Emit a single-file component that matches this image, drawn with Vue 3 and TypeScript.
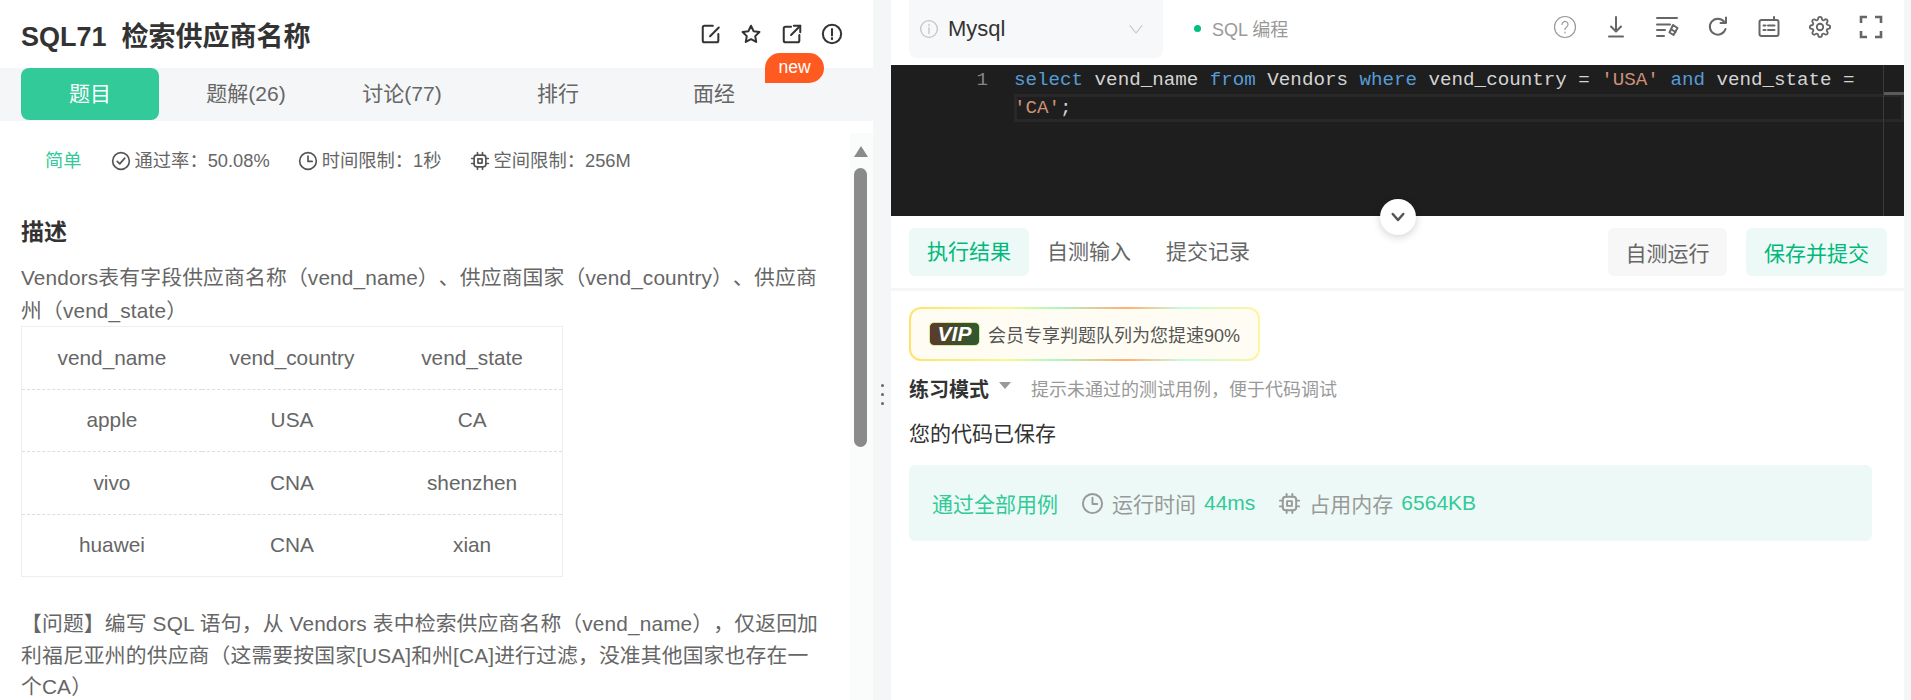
<script setup lang="ts">
const tabs = ["题目", "题解(26)", "讨论(77)", "排行", "面经"];
const tableHead = ["vend_name", "vend_country", "vend_state"];
const tableRows = [
  ["apple", "USA", "CA"],
  ["vivo", "CNA", "shenzhen"],
  ["huawei", "CNA", "xian"],
];
</script>

<template>
  <div class="page">
    <section class="left">
      <header class="title-bar">
        <h1 class="title">SQL71&nbsp; 检索供应商名称</h1>
        <div class="title-icons">
          <svg viewBox="0 0 24 24" class="ic"><path d="M20 12v7a2 2 0 0 1-2 2H5a2 2 0 0 1-2-2V5a2 2 0 0 1 2-2h9" /><path d="M20.5 5 11 14.5" /></svg>
          <svg viewBox="0 0 24 24" class="ic"><path d="M12 3l2.800 5.900 6.400.9-4.600 4.500 1.100 6.400L12 17.700l-5.700 3 1.100-6.400-4.600-4.500 6.400-.9z" /></svg>
          <svg viewBox="0 0 24 24" class="ic"><path d="M11 4H5a2 2 0 0 0-2 2v13a2 2 0 0 0 2 2h13a2 2 0 0 0 2-2v-6" /><path d="M14 3h7v7" /><path d="M21 3 11 13" /></svg>
          <svg viewBox="0 0 24 24" class="ic"><circle cx="12" cy="12" r="10" /><path d="M12 6.500v7" /><path d="M12 16.500v1.200" /></svg>
        </div>
      </header>
      <nav class="tabs">
        <a v-for="(tab, i) in tabs" :key="tab" class="tab" :class="{ active: i === 0 }">{{ tab }}</a>
        <span class="new-badge">new</span>
      </nav>
      <div class="left-body">
        <div class="content">
          <div class="meta">
            <span class="level">简单</span>
            <span class="meta-item">
              <svg viewBox="0 0 24 24" class="ic-meta"><circle cx="12" cy="12" r="10" /><path d="M7.500 12.500l3 3 6-7" /></svg>
              通过率：50.08%
            </span>
            <span class="meta-item">
              <svg viewBox="0 0 24 24" class="ic-meta"><circle cx="12" cy="12" r="10" /><path d="M12 6v6.500h5" /></svg>
              时间限制：1秒
            </span>
            <span class="meta-item">
              <svg viewBox="0 0 24 24" class="ic-meta"><rect x="5" y="5" width="14" height="14" rx="3" /><rect x="9.500" y="9.500" width="5" height="5" /><path d="M9 2v3M15 2v3M9 19v3M15 19v3M2 9h3M2 15h3M19 9h3M19 15h3" /></svg>
              空间限制：256M
            </span>
          </div>
          <h2 class="heading">描述</h2>
          <p class="desc">Vendors表有字段供应商名称（vend_name）、供应商国家（vend_country）、供应商州（vend_state）</p>
          <table class="data">
            <thead>
              <tr><th v-for="h in tableHead" :key="h">{{ h }}</th></tr>
            </thead>
            <tbody>
              <tr v-for="row in tableRows" :key="row[0]">
                <td v-for="cell in row" :key="cell">{{ cell }}</td>
              </tr>
            </tbody>
          </table>
          <p class="question">【问题】编写 SQL 语句，从 Vendors 表中检索供应商名称（vend_name），仅返回加利福尼亚州的供应商（这需要按国家[USA]和州[CA]进行过滤，没准其他国家也存在一个CA）</p>
        </div>
        <div class="scrollbar">
          <i class="scroll-up"></i>
          <i class="scroll-thumb"></i>
        </div>
      </div>
    </section>

    <div class="splitter"><i></i><i></i><i></i></div>

    <section class="right">
      <div class="toolbar">
        <div class="lang">
          <svg viewBox="0 0 24 24" class="ic-lang"><circle cx="12" cy="12" r="10" /><path d="M12 10.500v7M12 6.500v1.500" /></svg>
          <span class="lang-name">Mysql</span>
          <svg viewBox="0 0 24 24" class="ic-chev"><path d="M3 7l9 11 9-11" /></svg>
        </div>
        <span class="mode"><i class="dot"></i>SQL 编程</span>
        <div class="tools">
          <svg viewBox="0 0 24 24" class="tool light"><circle cx="12" cy="12" r="10.500" /><path d="M9 9.500a3 3 0 1 1 4.600 2.500c-1 .7-1.600 1.300-1.600 2.500M12 17v1" /></svg>
          <svg viewBox="0 0 24 24" class="tool"><path d="M12 2v14M7 11.500l5 5 5-5M5 21.500h14" /></svg>
          <svg viewBox="0 0 24 24" class="tool"><path d="M2 3h20M2 9.500h13M2 15h8M2 21h7" /><path d="M18 10l4.500 3-4 7-4-2.500z" /><path d="M16.500 14.500l4 2.500" /></svg>
          <svg viewBox="0 0 24 24" class="tool"><path d="M19.500 14a8 8 0 1 1-1.500-7.500" /><path d="M20 2.500V8h-5.500" /></svg>
          <svg viewBox="0 0 24 24" class="tool"><rect x="2.500" y="5" width="19" height="16" rx="2" /><path d="M17 2v3M6.500 10.500h2M11 10.500h6.500M6.500 15h2M11 15h6.500" /></svg>
          <svg viewBox="-1 -1 26 26" class="tool"><circle cx="12" cy="12" r="3.500" /><path d="M19.400 15a1.650 1.650 0 0 0 .33 1.820l.06.06a2 2 0 0 1 0 2.830 2 2 0 0 1-2.830 0l-.06-.06a1.650 1.650 0 0 0-1.820-.33 1.650 1.650 0 0 0-1 1.510V21a2 2 0 0 1-2 2 2 2 0 0 1-2-2v-.09A1.650 1.650 0 0 0 9 19.400a1.650 1.650 0 0 0-1.820.33l-.06.06a2 2 0 0 1-2.830 0 2 2 0 0 1 0-2.830l.06-.06a1.650 1.650 0 0 0 .33-1.820 1.650 1.650 0 0 0-1.510-1H3a2 2 0 0 1-2-2 2 2 0 0 1 2-2h.09A1.650 1.650 0 0 0 4.600 9a1.650 1.650 0 0 0-.33-1.820l-.06-.06a2 2 0 0 1 0-2.830 2 2 0 0 1 2.830 0l.06.06a1.650 1.650 0 0 0 1.820.33H9a1.650 1.650 0 0 0 1-1.510V3a2 2 0 0 1 2-2 2 2 0 0 1 2 2v.09a1.650 1.650 0 0 0 1 1.510 1.650 1.650 0 0 0 1.820-.33l.06-.06a2 2 0 0 1 2.830 0 2 2 0 0 1 0 2.830l-.06.06a1.650 1.650 0 0 0-.33 1.820V9a1.650 1.650 0 0 0 1.510 1H21a2 2 0 0 1 2 2 2 2 0 0 1-2 2h-.09a1.650 1.650 0 0 0-1.510 1z" /></svg>
          <svg viewBox="0 0 24 24" class="tool square"><path d="M2 8V2h6M16 2h6v6M22 16v6h-6M8 22H2v-6" /></svg>
        </div>
      </div>

      <div class="editor">
        <div class="line-no">1</div>
        <div class="code">
          <div class="line"><b class="kw">select</b> vend_name <b class="kw">from</b> Vendors <b class="kw">where</b> vend_country = <b class="str">'USA'</b> <b class="kw">and</b> vend_state =</div>
          <div class="line current"><b class="str">'CA'</b>;</div>
        </div>
        <div class="ruler"><i></i></div>
        <button class="collapse">
          <svg viewBox="0 0 24 24"><path d="M5 8l7 8 7-8" /></svg>
        </button>
      </div>

      <div class="result-tabs">
        <a class="rtab active">执行结果</a>
        <a class="rtab">自测输入</a>
        <a class="rtab">提交记录</a>
        <span class="spacer"></span>
        <button class="btn">自测运行</button>
        <button class="btn primary">保存并提交</button>
      </div>

      <div class="result">
        <div class="vip">
          <span class="vip-logo">VIP</span>
          <span>会员专享判题队列为您提速90%</span>
        </div>
        <div class="practice">
          <strong>练习模式</strong>
          <i class="caret"></i>
          <span class="hint">提示未通过的测试用例，便于代码调试</span>
        </div>
        <p class="saved">您的代码已保存</p>
        <div class="pass">
          <span class="pass-title">通过全部用例</span>
          <span class="pass-item">
            <svg viewBox="0 0 24 24" class="ic-pass"><circle cx="12" cy="12" r="10" /><path d="M12 6v6.500h5" /></svg>
            运行时间
            <em>44ms</em>
          </span>
          <span class="pass-item">
            <svg viewBox="0 0 24 24" class="ic-pass"><rect x="5" y="5" width="14" height="14" rx="3" /><rect x="9.500" y="9.500" width="5" height="5" /><path d="M9 2v3M15 2v3M9 19v3M15 19v3M2 9h3M2 15h3M19 9h3M19 15h3" /></svg>
            占用内存
            <em>6564KB</em>
          </span>
        </div>
      </div>
    </section>
  </div>
</template>

<style>
html,
body {
  margin: 0;
  background: #f5f6f8;
  overflow: hidden;
}
</style>

<style scoped>
.page {
  display: flex;
  width: 1911px;
  height: 700px;
  overflow: hidden;
  background: #f5f6f8;
  font-family: "Liberation Sans", "Noto Sans CJK SC", sans-serif;
  color: #666;
  text-spacing-trim: space-all;
}

svg {
  display: block;
  fill: none;
  stroke-linecap: round;
  stroke-linejoin: round;
}

.left {
  width: 873px;
  flex: none;
  display: flex;
  flex-direction: column;
  background: #fff;
}

.title-bar {
  height: 68px;
  flex: none;
  display: flex;
  align-items: center;
  justify-content: space-between;
  padding: 0 30px 0 21px;
}

.title {
  margin: 0;
  font-size: 27px;
  font-weight: 700;
  color: #333;
}

.title-icons {
  display: flex;
  gap: 18.500px;
}

.ic {
  width: 22px;
  height: 22px;
  stroke: #333;
  stroke-width: 2.200;
}

.tabs {
  position: relative;
  height: 53px;
  flex: none;
  display: flex;
  gap: 18px;
  padding-left: 21px;
  background: #f5f6f8;
}

.tab {
  width: 138px;
  height: 52px;
  line-height: 52px;
  text-align: center;
  font-size: 21px;
  color: #666;
  border-radius: 8px;
}

.tab.active {
  background: #32ca99;
  color: #fff;
}

.new-badge {
  position: absolute;
  left: 765px;
  top: -15px;
  width: 59px;
  height: 30px;
  line-height: 29px;
  text-align: center;
  font-size: 17.5px;
  color: #fff;
  background: #ff5a1f;
  border-radius: 15px 15px 15px 0;
}

.left-body {
  flex: 1;
  min-height: 0;
  display: flex;
}

.content {
  flex: 1;
  min-width: 0;
  padding: 0 23px 0 21px;
}

.meta {
  height: 24px;
  margin-top: 28px;
  display: flex;
  align-items: center;
  font-size: 18.300px;
  line-height: 24px;
  color: #666;
}

.level {
  margin-left: 24px;
  margin-right: 29px;
  color: #32ca99;
}

.meta-item {
  display: flex;
  align-items: center;
  gap: 4px;
  margin-right: 28px;
}

.ic-meta {
  width: 20px;
  height: 20px;
  stroke: #555;
  stroke-width: 2;
}

.heading {
  margin: 42px 0 0;
  font-size: 23px;
  line-height: 34px;
  font-weight: 700;
  color: #333;
}

.desc {
  margin: 12px 0 0;
  font-size: 20.800px;
  line-height: 33px;
  letter-spacing: 0.15px;
}

.data {
  margin-top: -1px;
  width: 542px;
  table-layout: fixed;
  border-collapse: collapse;
  border: 1px solid #eee;
  font-size: 20.800px;
  text-align: center;
}

.data th,
.data td {
  height: 61.500px;
  padding: 0;
  font-weight: 400;
  border-bottom: 1px dashed #ddd;
}

.data tbody tr:last-child td {
  border-bottom: 1px solid #eee;
}

.question {
  margin: 31px 0 0;
  font-size: 20.800px;
  line-height: 31.500px;
  letter-spacing: 0.15px;
}

.scrollbar {
  width: 23px;
  flex: none;
  margin-top: 12px;
  background: #fafbfb;
  display: flex;
  flex-direction: column;
  align-items: center;
}

.scroll-up {
  width: 0;
  height: 0;
  margin-top: 13px;
  margin-right: 2px;
  border-left: 7px solid transparent;
  border-right: 7px solid transparent;
  border-bottom: 11px solid #8a8a8a;
}

.scroll-thumb {
  width: 13px;
  height: 279px;
  margin-top: 11px;
  margin-right: 2px;
  border-radius: 7px;
  background: #8a8a8a;
}

.splitter {
  width: 18px;
  flex: none;
  display: flex;
  flex-direction: column;
  align-items: center;
  justify-content: flex-start;
  gap: 6px;
  padding-top: 384px;
  box-sizing: border-box;
}

.splitter i {
  width: 3px;
  height: 3px;
  border-radius: 50%;
  background: #666;
}

.right {
  width: 1013px;
  flex: none;
  background: #fff;
  display: flex;
  flex-direction: column;
}

.toolbar {
  height: 65px;
  flex: none;
  display: flex;
  align-items: flex-start;
  padding-left: 18px;
}

.lang {
  width: 254px;
  height: 58px;
  box-sizing: border-box;
  padding: 0 19px 0 10px;
  display: flex;
  align-items: center;
  background: #f7f8f9;
  border-radius: 0 0 8px 8px;
}

.ic-lang {
  width: 20px;
  height: 20px;
  stroke: #c4c4c4;
  stroke-width: 1.600;
}

.lang-name {
  flex: 1;
  margin-left: 9px;
  font-size: 22px;
  color: #333;
}

.ic-chev {
  width: 16px;
  height: 16px;
  stroke: #c4c4c4;
  stroke-width: 1.600;
}

.mode {
  display: flex;
  align-items: center;
  height: 56px;
  margin-left: 31px;
  font-size: 18px;
  color: #999;
}

.dot {
  width: 7px;
  height: 7px;
  margin-right: 11px;
  border-radius: 50%;
  background: #00c07f;
}

.tools {
  margin-left: auto;
  margin-right: 21px;
  height: 54px;
  display: flex;
  align-items: center;
  gap: 27px;
}

.tool {
  width: 24px;
  height: 24px;
  stroke: #666;
  stroke-width: 2;
}

.tool.light {
  stroke: #999;
  stroke-width: 1.200;
}

.tool.square {
  stroke-linecap: butt;
  stroke-linejoin: miter;
  stroke-width: 2.600;
}

.editor {
  position: relative;
  height: 151px;
  flex: none;
  display: flex;
  background: #1e1e1e;
  color: #d4d4d4;
  font-family: "Liberation Mono", monospace;
  font-size: 19.200px;
  line-height: 28px;
}

.line-no {
  width: 97px;
  flex: none;
  margin-top: 1px;
  text-align: right;
  color: #858585;
}

.code {
  flex: 1;
  margin-left: 26px;
  padding-top: 1px;
  white-space: pre;
}

.code b {
  font-weight: 400;
}

.kw {
  color: #569cd6;
}

.str {
  color: #ce9178;
}

.current {
  box-shadow: inset 0 0 0 3px #282828;
}

.ruler {
  position: absolute;
  top: 0;
  right: 0;
  bottom: 0;
  width: 20px;
  border-left: 1px solid #3a3a3a;
}

.ruler i {
  display: block;
  height: 3px;
  margin-top: 27px;
  background: #5a5a5a;
}

.collapse {
  position: absolute;
  left: 489px;
  bottom: -19px;
  z-index: 1;
  width: 36px;
  height: 36px;
  padding: 9px;
  border: 0;
  border-radius: 50%;
  background: #fff;
  box-shadow: 0 2px 8px rgba(0, 0, 0, 0.18);
}

.collapse svg {
  stroke: #555;
  stroke-width: 3.400;
}

.result-tabs {
  height: 75px;
  flex: none;
  box-sizing: border-box;
  padding: 12px 17px 12px 18px;
  display: flex;
  align-items: stretch;
  border-bottom: 3px solid #f5f6f7;
  font-size: 21px;
}

.rtab {
  padding: 0 15px;
  line-height: 48px;
  margin-right: 5px;
  color: #666;
  border-radius: 6px;
}

.rtab.active {
  margin-right: 3px;
  padding: 0 18px;
  color: #00b87a;
  background: #edf9f6;
}

.spacer {
  flex: 1;
}

.btn {
  font: inherit;
  color: #666;
  border: 0;
  border-radius: 6px;
  background: #f7f7f7;
  width: 119px;
  padding: 0;
}

.btn.primary {
  width: 141px;
  margin-left: 19px;
  color: #00b87a;
  background: #edf9f6;
}

.result {
  padding: 16px 32px 0 18px;
}

.vip {
  box-sizing: border-box;
  width: 351px;
  height: 54px;
  padding-left: 18px;
  display: flex;
  align-items: center;
  gap: 8px;
  font-size: 18px;
  color: #555;
  border: 2px solid transparent;
  border-radius: 12px;
  background:
    linear-gradient(#fffdf3, #fffdf3) padding-box,
    linear-gradient(90deg, #ffe26a, #f7f98f 28%, #aef7c2 42%, #ffb070 62%, #c6fbe0 78%, #fff59a) border-box;
}

.vip-logo {
  box-sizing: border-box;
  width: 51px;
  height: 24px;
  line-height: 22px;
  text-align: center;
  font-size: 21px;
  font-weight: 700;
  font-style: italic;
  color: #fff;
  border-radius: 5px;
  border: 1px solid #d6e89a;
  background: linear-gradient(90deg, #5c3a2c, #2e5a30);
}

.practice {
  height: 28px;
  margin-top: 13px;
  display: flex;
  align-items: center;
}

.practice strong {
  font-size: 20px;
  font-weight: 700;
  color: #333;
}

.caret {
  width: 0;
  height: 0;
  margin: -6px 0 0 10px;
  border-left: 6px solid transparent;
  border-right: 6px solid transparent;
  border-top: 7px solid #999;
}

.hint {
  margin-left: 20px;
  font-size: 18px;
  color: #999;
}

.saved {
  margin: 18px 0 0;
  font-size: 21px;
  line-height: 28px;
  color: #333;
}

.pass {
  height: 76px;
  margin-top: 17px;
  padding-left: 23px;
  display: flex;
  align-items: center;
  gap: 23px;
  font-size: 21px;
  color: #32ca99;
  background: #edf9f6;
  border-radius: 6px;
}

.pass-item {
  display: flex;
  align-items: center;
  gap: 8px;
  color: #999;
}

.pass-item em {
  font-style: normal;
  color: #32ca99;
}

.ic-pass {
  width: 23px;
  height: 23px;
  stroke: #999;
  stroke-width: 2;
}
</style>
